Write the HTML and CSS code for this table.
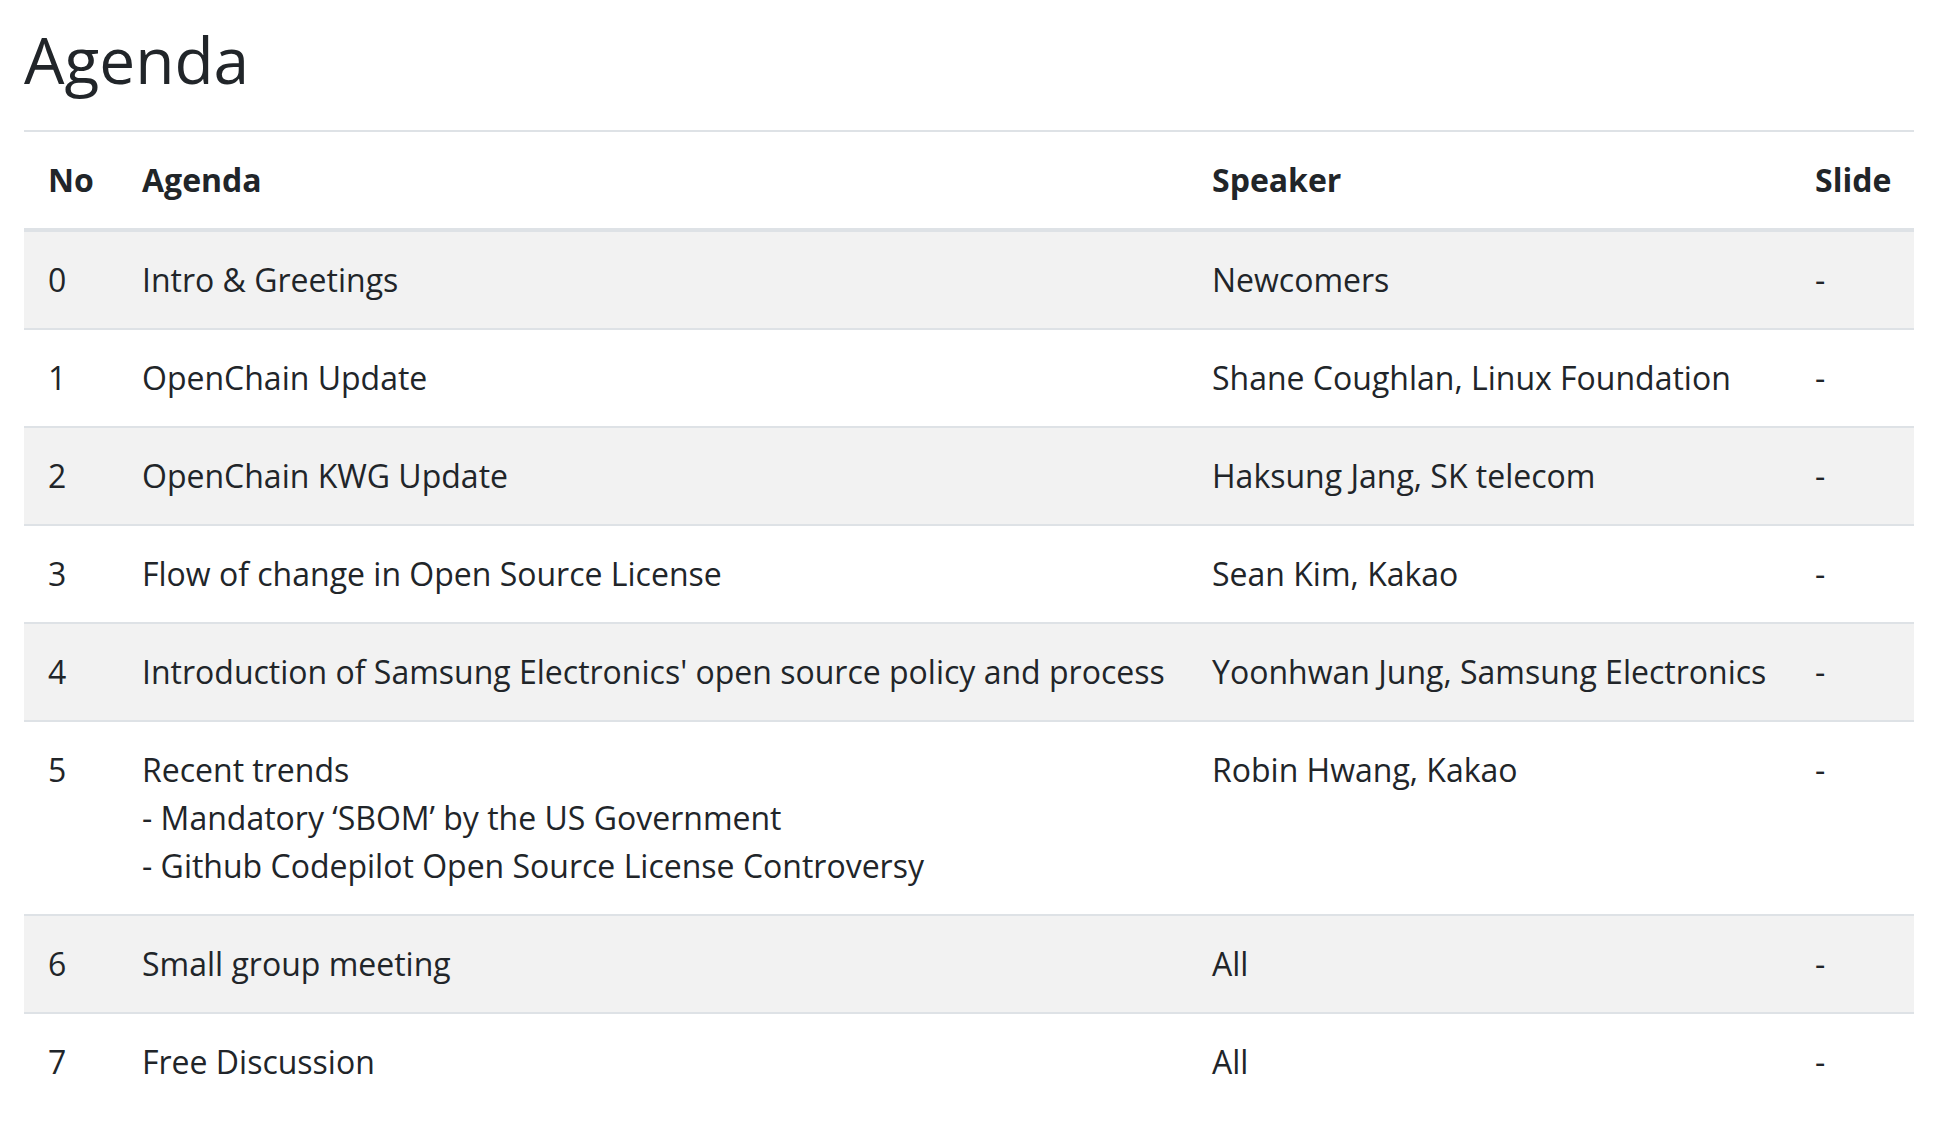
FILE: index.html
```html
<!DOCTYPE html>
<html lang="en">
<head>
<meta charset="utf-8">
<title>Agenda</title>
<link rel="stylesheet" href="styles.css">
</head>
<body>
<main class="page">
  <h2 class="title">Agenda</h2>
  <table class="agenda">
    <colgroup>
      <col class="c-no">
      <col class="c-agenda">
      <col class="c-speaker">
      <col class="c-slide">
    </colgroup>
    <thead>
      <tr><th>No</th><th>Agenda</th><th>Speaker</th><th>Slide</th></tr>
    </thead>
    <tbody>
      <tr><td>0</td><td>Intro &amp; Greetings</td><td>Newcomers</td><td>-</td></tr>
      <tr><td>1</td><td>OpenChain Update</td><td>Shane Coughlan, Linux Foundation</td><td>-</td></tr>
      <tr><td>2</td><td>OpenChain KWG Update</td><td>Haksung Jang, SK telecom</td><td>-</td></tr>
      <tr><td>3</td><td>Flow of change in Open Source License</td><td>Sean Kim, Kakao</td><td>-</td></tr>
      <tr><td>4</td><td>Introduction of Samsung Electronics' open source policy and process</td><td>Yoonhwan Jung, Samsung Electronics</td><td>-</td></tr>
      <tr><td>5</td><td>Recent trends<br>- Mandatory ‘SBOM’ by the US Government<br>- Github Codepilot Open Source License Controversy</td><td>Robin Hwang, Kakao</td><td>-</td></tr>
      <tr><td>6</td><td>Small group meeting</td><td>All</td><td>-</td></tr>
      <tr><td>7</td><td>Free Discussion</td><td>All</td><td>-</td></tr>
    </tbody>
  </table>
</main>
</body>
</html>
```
FILE: styles.css
```css
html, body {
  margin: 0;
  padding: 0;
  background: #ffffff;
}
body {
  font-family: "Open Sans", "Noto Sans", sans-serif;
  color: #212529;
  font-size: 32px;
  line-height: 1.5;
}
.page {
  padding: 22px 35px 0 24px;
}
.title {
  margin: 0 0 31px 0;
  font-size: 64px;
  font-weight: 400;
  line-height: 76.8px;
  color: #212529;
}
.agenda {
  width: 1890px;
  border-collapse: collapse;
  table-layout: fixed;
}
.c-no { width: 94px; }
.c-agenda { width: 1070px; }
.c-speaker { width: 603px; }
.c-slide { width: 123px; }
.agenda th,
.agenda td {
  padding: 24px;
  text-align: left;
  vertical-align: top;
  border-top: 2px solid #dee2e6;
  white-space: nowrap;
}
.agenda th {
  font-weight: 700;
  vertical-align: bottom;
  border-bottom: 4px solid #dee2e6;
}
.agenda tbody tr:nth-child(odd) {
  background: #f2f2f2;
}
```
